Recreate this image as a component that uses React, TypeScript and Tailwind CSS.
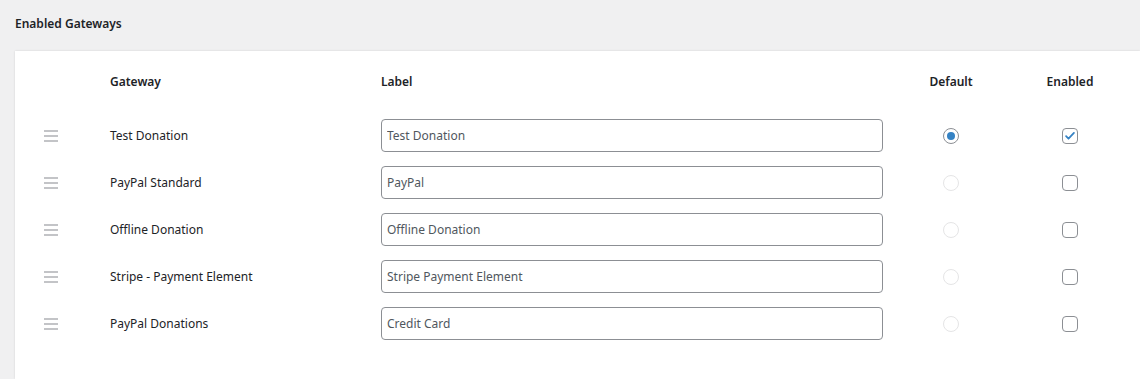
import { Fragment } from "react";

type Gateway = {
  id: string;
  name: string;
  label: string;
  isDefault: boolean;
  enabled: boolean;
};

const gateways: Gateway[] = [
  { id: "manual", name: "Test Donation", label: "Test Donation", isDefault: true, enabled: true },
  { id: "paypal", name: "PayPal Standard", label: "PayPal", isDefault: false, enabled: false },
  { id: "offline", name: "Offline Donation", label: "Offline Donation", isDefault: false, enabled: false },
  { id: "stripe", name: "Stripe - Payment Element", label: "Stripe Payment Element", isDefault: false, enabled: false },
  { id: "paypal-commerce", name: "PayPal Donations", label: "Credit Card", isDefault: false, enabled: false },
];

function DragHandle() {
  return (
    <div className="flex w-[14px] flex-col gap-[3px]">
      <span className="h-[2px] bg-[#c3c4c7]" />
      <span className="h-[2px] bg-[#c3c4c7]" />
      <span className="h-[2px] bg-[#c3c4c7]" />
    </div>
  );
}

function Radio({ checked }: { checked: boolean }) {
  return (
    <span
      className={`flex h-4 w-4 items-center justify-center rounded-full border bg-white ${
        checked ? "border-[#8c8f94]" : "border-[#e5e5e6]"
      }`}
    >
      {checked ? <span className="h-2 w-2 rounded-full bg-[#3582c4]" /> : null}
    </span>
  );
}

function Checkbox({ checked }: { checked: boolean }) {
  return (
    <span className="flex h-4 w-4 items-center justify-center rounded-[4px] border border-[#8c8f94] bg-white">
      {checked ? (
        <svg viewBox="0 0 16 16" className="h-[14px] w-[14px]">
          <path d="M3.5 8.2l2.8 2.9 6.2-6.6" fill="none" stroke="#3582c4" strokeWidth="2" strokeLinecap="round" strokeLinejoin="round" />
        </svg>
      ) : null}
    </span>
  );
}

export default function App() {
  return (
    <div
      className="min-h-[379px] bg-[#f0f0f1] pl-[15px] text-[12px] text-[#1d2327]"
      style={{ fontFamily: '"Noto Sans", "Open Sans", sans-serif' }}
    >
      <h2 className="h-[51px] pt-[15px] text-[12px] font-semibold leading-[18px]">Enabled Gateways</h2>

      <div className="min-h-[328px] bg-white shadow-[0_0_2px_rgba(0,0,0,0.12)]">
        <div className="grid grid-cols-[95px_271px_502px_136px_102px] items-center">
          <div className="h-[61px]" />
          <div className="font-semibold">Gateway</div>
          <div className="font-semibold">Label</div>
          <div className="text-center font-semibold">Default</div>
          <div className="text-center font-semibold">Enabled</div>

          {gateways.map((g) => (
            <Fragment key={g.id}>
              <div className="flex h-[47px] items-center pl-[29px]">
                <DragHandle />
              </div>
              <div>{g.name}</div>
              <div>
                <input
                  readOnly
                  value={g.label}
                  className="h-[33px] w-[502px] rounded-[4px] border border-[#8c8f94] bg-white px-[5px] text-[12px] text-[#50575e] outline-none"
                  style={{ fontFamily: '"Noto Sans", "Open Sans", sans-serif' }}
                />
              </div>
              <div className="flex justify-center">
                <Radio checked={g.isDefault} />
              </div>
              <div className="flex justify-center">
                <Checkbox checked={g.enabled} />
              </div>
            </Fragment>
          ))}
        </div>
      </div>
    </div>
  );
}
